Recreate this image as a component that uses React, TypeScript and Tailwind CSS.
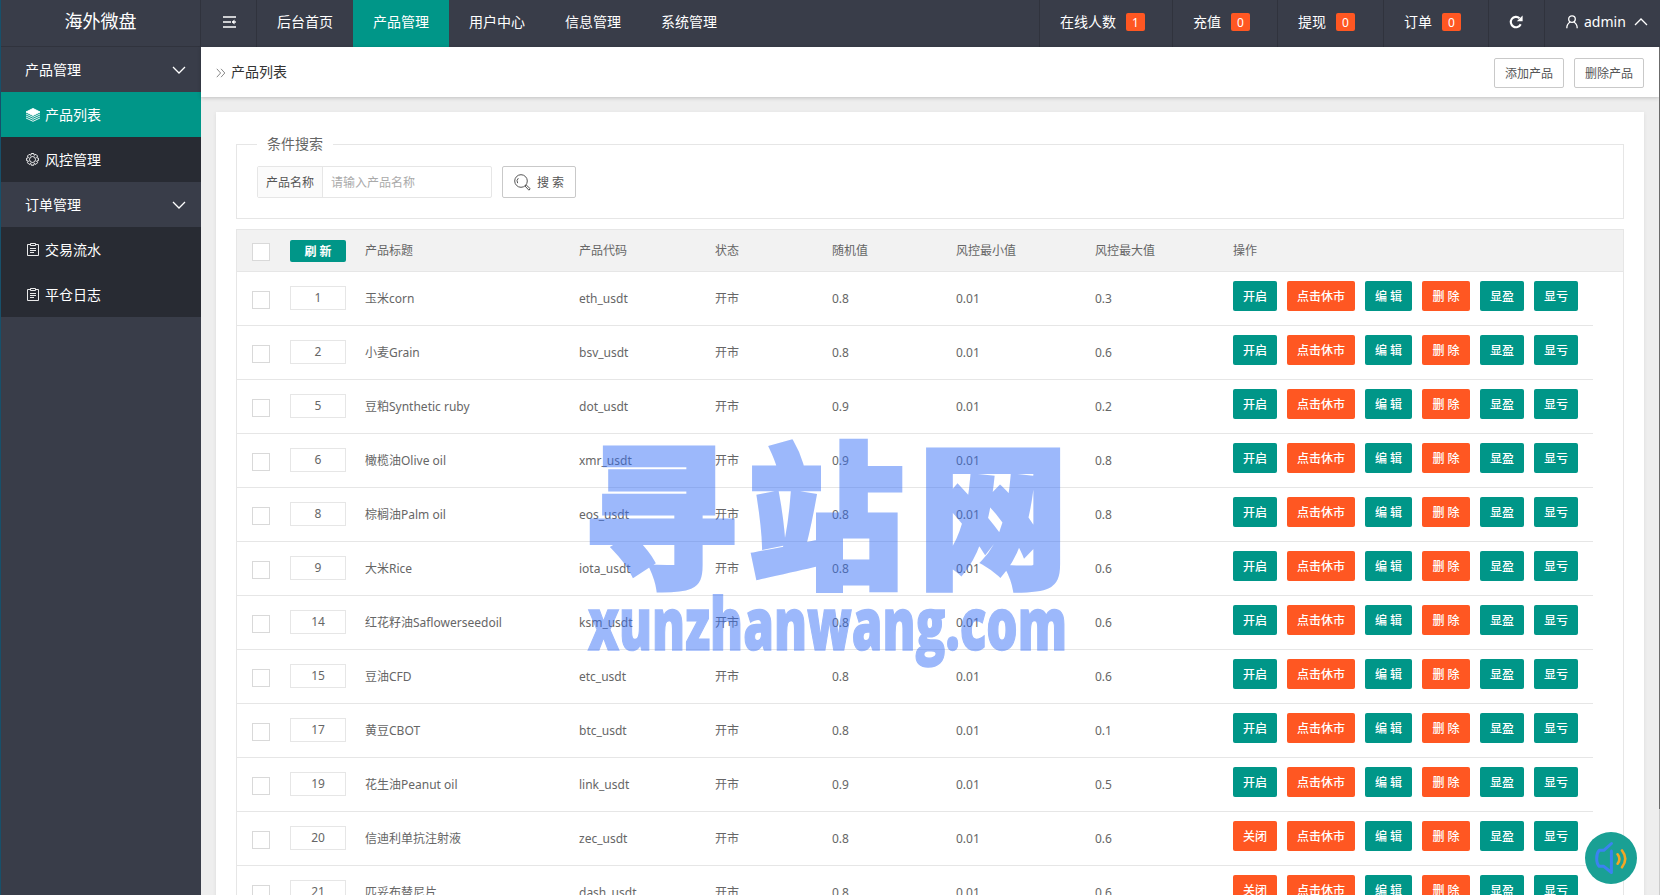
import clsx from "clsx";
import type { ReactNode } from "react";

type Product = {
	id: number;
	title: string;
	code: string;
	random: string;
	min: string;
	max: string;
	open: boolean;
};

const products: Product[] = [
	{ id: 1, title: "玉米corn", code: "eth_usdt", random: "0.8", min: "0.01", max: "0.3", open: true },
	{ id: 2, title: "小麦Grain", code: "bsv_usdt", random: "0.8", min: "0.01", max: "0.6", open: true },
	{ id: 5, title: "豆粕Synthetic ruby", code: "dot_usdt", random: "0.9", min: "0.01", max: "0.2", open: true },
	{ id: 6, title: "橄榄油Olive oil", code: "xmr_usdt", random: "0.9", min: "0.01", max: "0.8", open: true },
	{ id: 8, title: "棕榈油Palm oil", code: "eos_usdt", random: "0.8", min: "0.01", max: "0.8", open: true },
	{ id: 9, title: "大米Rice", code: "iota_usdt", random: "0.8", min: "0.01", max: "0.6", open: true },
	{ id: 14, title: "红花籽油Saflowerseedoil", code: "ksm_usdt", random: "0.8", min: "0.01", max: "0.6", open: true },
	{ id: 15, title: "豆油CFD", code: "etc_usdt", random: "0.8", min: "0.01", max: "0.6", open: true },
	{ id: 17, title: "黄豆CBOT", code: "btc_usdt", random: "0.8", min: "0.01", max: "0.1", open: true },
	{ id: 19, title: "花生油Peanut oil", code: "link_usdt", random: "0.9", min: "0.01", max: "0.5", open: true },
	{ id: 20, title: "信迪利单抗注射液", code: "zec_usdt", random: "0.8", min: "0.01", max: "0.6", open: false },
	{ id: 21, title: "匹妥布替尼片", code: "dash_usdt", random: "0.8", min: "0.01", max: "0.6", open: false },
];

const topNav = ["后台首页", "产品管理", "用户中心", "信息管理", "系统管理"];

const counters = [
	{ label: "在线人数", count: 1, width: "w-[133px]" },
	{ label: "充值", count: 0, width: "w-[105px]" },
	{ label: "提现", count: 0, width: "w-[106px]" },
	{ label: "订单", count: 0, width: "w-[105px]" },
];

const columns = "grid grid-cols-[38px_75px_214px_136px_117px_124px_139px_138px_375px]";

const Chevron = ({ up }: { up?: boolean }) => (
	<svg width="14" height="8" viewBox="0 0 14 8" fill="none" stroke="currentColor" strokeWidth="1.3">
		<path d={up ? "M1 7 7 1l6 6" : "M1 1l6 6 6-6"} />
	</svg>
);

const LayersIcon = () => (
	<svg width="16" height="14" viewBox="0 0 16 14" fill="none" stroke="currentColor">
		<path d="M8 .5 15 4 8 7.5 1 4z" fill="currentColor" />
		<path d="M1 6l7 3.3L15 6M1 8l7 3.3L15 8M1 10l7 3.3 7-3.3" strokeWidth="0.9" />
	</svg>
);

const GearIcon = () => (
	<svg width="15" height="15" viewBox="0 0 16 16" fill="none" stroke="currentColor" strokeLinejoin="round">
		<path
			d="M6.7.8h2.6l.5 1.9 1.8-1 1.8 1.8-1 1.8 1.9.5v2.6l-1.9.4 1 1.8-1.8 1.8-1.8-1-.5 1.9H6.7l-.5-1.9-1.8 1-1.8-1.8 1-1.8-1.9-.4V5.8l1.9-.5-1-1.8 1.8-1.8 1.8 1z"
			transform="translate(0 .8)"
			strokeWidth="1"
		/>
		<circle cx="8" cy="8" r="3.2" />
	</svg>
);

const NoteIcon = () => (
	<svg width="12" height="13" viewBox="0 0 12 13" fill="none" stroke="currentColor" strokeWidth="0.9">
		<path d="M3.5 1.5h-3v11h11v-11h-3M3.5.5h5v2h-5zM3 5.5h6M3 7.5h6M3 9.5h4" />
	</svg>
);

const MenuIcon = () => (
	<svg width="14" height="12" viewBox="0 0 14 12" fill="none" stroke="currentColor" strokeWidth="1.7">
		<path d="M1 1h13M1 6h8M1 11h13" />
		<path d="M10 6h4" strokeWidth="1.3" />
		<path d="M12.5 3.5v5L9.8 6z" fill="currentColor" stroke="none" />
	</svg>
);

const RefreshIcon = () => (
	<svg width="14" height="14" viewBox="0 0 14 14" fill="none">
		<path d="M11.7 9.3A5.2 5.2 0 1 1 10.5 3.2" stroke="currentColor" strokeWidth="2.1" />
		<path d="M13.6.4v5.8H7.8z" fill="currentColor" />
	</svg>
);

const UserIcon = () => (
	<svg width="12" height="14" viewBox="0 0 12 14" fill="none" stroke="currentColor" strokeWidth="1.3">
		<circle cx="6" cy="4.1" r="3.3" />
		<path d="M4.2 7C2 8.1.8 10.3.8 13.2M7.8 7c2.2 1.1 3.4 3.3 3.4 6.2" />
	</svg>
);

const SearchIcon = () => (
	<svg width="17" height="17" viewBox="0 0 17 17" fill="none" stroke="currentColor">
		<circle cx="7" cy="7" r="6.3" />
		<path d="M3.7 9.2a4 4 0 0 1 .6-5M11 12l1.1-1.1 4.1 3.8-1.3 1.5z" />
	</svg>
);

const SideGroup = ({ title, children }: { title: string; children: ReactNode }) => (
	<div>
		<div className="flex h-[45px] items-center justify-between pr-[15px] pl-6 text-white">
			<span>{title}</span>
			<Chevron />
		</div>
		<div className="bg-[#282b33]">{children}</div>
	</div>
);

const SideItem = ({ label, icon, active }: { label: string; icon: ReactNode; active?: boolean }) => (
	<div className={clsx("flex h-[45px] items-center pl-6 text-white", active && "bg-[#009688]")}>
		<span className="flex w-5 items-center">{icon}</span>
		<span>{label}</span>
	</div>
);

const Action = ({ label, width, danger }: { label: string; width: string; danger?: boolean }) => (
	<button
		className={clsx(
			"h-[30px] rounded-xs pt-0.5 font-medium whitespace-nowrap text-white",
			width,
			danger ? "bg-[#ff5722]" : "bg-[#009688]"
		)}
	>
		{label}
	</button>
);

const CheckBox = () => <div className="h-[18px] w-[18px] border border-[#d9d9d9] bg-white" />;

const ProductRow = ({ product }: { product: Product }) => (
	<div className={clsx(columns, "h-[54px] w-[1356px] border-b border-[#e6e6e6]")}>
		<div className="pt-[19px] pl-[15px]">
			<CheckBox />
		</div>
		<div className="pt-[14px] pl-[15px]">
			<div className="flex h-6 w-14 items-center justify-center border border-[#e6e6e6]">{product.id}</div>
		</div>
		<div className="pt-[17px] pl-[15px] leading-5">{product.title}</div>
		<div className="pt-[17px] pl-[15px] leading-5">{product.code}</div>
		<div className="pt-[17px] pl-[15px] leading-5">开市</div>
		<div className="pt-[17px] pl-[15px] leading-5">{product.random}</div>
		<div className="pt-[17px] pl-[15px] leading-5">{product.min}</div>
		<div className="pt-[17px] pl-[15px] leading-5">{product.max}</div>
		<div className="flex gap-2.5 pt-[9px] pl-[15px]">
			<Action label={product.open ? "开启" : "关闭"} width="w-11" danger={!product.open} />
			<Action label="点击休市" width="w-[68px]" danger />
			<Action label="编 辑" width="w-[47px]" />
			<Action label="删 除" width="w-12" danger />
			<Action label="显盈" width="w-11" />
			<Action label="显亏" width="w-11" />
		</div>
	</div>
);

const Watermark = () => (
	<svg
		className="pointer-events-none absolute top-[430px] left-[580px]"
		width="500"
		height="250"
		fill="#3770f7"
		stroke="#3770f7"
		opacity="0.49"
	>
		<g fontFamily="'Noto Sans CJK SC', sans-serif" fontWeight="900" fontSize="156" strokeWidth="5">
			<text x="1" y="145">寻</text>
			<text x="167" y="145">站</text>
			<text x="337" y="145" textLength="150" lengthAdjust="spacingAndGlyphs">网</text>
		</g>
		<text
			x="7"
			y="220"
			fontFamily="'Open Sans', 'Noto Sans', sans-serif"
			fontWeight="800"
			fontSize="73"
			strokeWidth="1.5"
			textLength="479"
			lengthAdjust="spacingAndGlyphs"
		>
			xunzhanwang.com
		</text>
	</svg>
);

const Header = () => (
	<header className="flex h-[47px] bg-[#393d49] text-white">
		<div className="flex w-14 items-center justify-center border-r border-[#30333d] pb-[3px]">
			<MenuIcon />
		</div>
		<nav className="flex">
			{topNav.map((item) => (
				<div
					key={item}
					className={clsx("flex w-24 items-center justify-center pb-[3px]", item === "产品管理" && "bg-[#009688]")}
				>
					{item}
				</div>
			))}
		</nav>
		<div className="ml-auto flex">
			{counters.map(({ label, count, width }) => (
				<div key={label} className={clsx("flex items-center gap-2.5 border-l border-[#30333d] pb-[3px] pl-5", width)}>
					<span>{label}</span>
					<span className="flex h-[18px] w-[19px] items-center justify-center rounded-xs bg-[#ff5722] pt-px text-xs">
						{count}
					</span>
				</div>
			))}
			<div className="flex w-14 items-center border-l border-[#30333d] pb-[3px] pl-5">
				<RefreshIcon />
			</div>
			<div className="flex w-[116px] items-center border-l border-[#30333d] pb-[3px] pl-[21px]">
				<UserIcon />
				<span className="ml-1.5 w-[50px]">admin</span>
				<Chevron up />
			</div>
		</div>
	</header>
);

const App = () => {
	return (
		<div className="relative flex h-[895px] w-[1660px] overflow-hidden border-l border-[#17506a] bg-[#eeeeee] font-['Noto_Sans','Noto_Sans_CJK_SC',sans-serif] text-sm">
			<aside className="w-[200px] shrink-0 bg-[#393d49]">
				<div className="flex h-[47px] items-center justify-center border-r border-b border-[#30333d] pb-1 text-lg text-white">
					海外微盘
				</div>
				<SideGroup title="产品管理">
					<SideItem label="产品列表" icon={<LayersIcon />} active />
					<SideItem label="风控管理" icon={<GearIcon />} />
				</SideGroup>
				<SideGroup title="订单管理">
					<SideItem label="交易流水" icon={<span className="pl-0.5"><NoteIcon /></span>} />
					<SideItem label="平仓日志" icon={<span className="pl-0.5"><NoteIcon /></span>} />
				</SideGroup>
			</aside>

			<div className="flex min-w-0 flex-1 flex-col">
				<Header />
				<div className="flex min-h-0 flex-1">
					<main className="flex w-[1458px] flex-col">
						<div className="flex h-[50px] shrink-0 items-center bg-white pr-[15px] pl-[15px] shadow-[0_1px_4px_rgba(0,0,0,0.2)]">
							<svg width="10" height="10" viewBox="0 0 10 10" fill="none" stroke="#888" className="mt-0.5">
								<path d="M.8.8 4.6 5 .8 9.2M5 .8 8.8 5 5 9.2" />
							</svg>
							<span className="ml-[5px] text-[#333]">产品列表</span>
							<div className="mt-0.5 ml-auto flex gap-2.5 text-xs text-[#555]">
								<button className="h-[30px] w-[70px] rounded-xs border border-[#c9c9c9] bg-white pt-px">添加产品</button>
								<button className="h-[30px] w-[70px] rounded-xs border border-[#c9c9c9] bg-white pt-px">删除产品</button>
							</div>
						</div>

						<div className="mx-[15px] mt-[15px] flex-1 bg-white px-5 pt-[22px] text-xs text-[#666] shadow-[0_1px_4px_rgba(0,0,0,0.08)]">
							<fieldset className="h-[85px] border border-[#e6e6e6] px-5">
								<legend className="h-5 px-2.5 text-sm leading-5">条件搜索</legend>
								<div className="mt-3 flex gap-2.5">
									<div className="flex h-8 w-[235px] rounded-xs border border-[#e6e6e6]">
										<span className="flex w-[65px] items-center justify-center border-r border-[#e6e6e6] bg-[#fbfbfb] pt-0.5 text-[#555]">
											产品名称
										</span>
										<input
											className="min-w-0 flex-1 pt-0.5 pl-2 outline-none placeholder:text-[#aaa]"
											placeholder="请输入产品名称"
										/>
									</div>
									<button className="flex h-8 w-[74px] items-center rounded-xs border border-[#c9c9c9] pl-[11px] text-[#555]">
										<SearchIcon />
										<span className="ml-1.5 pt-0.5">搜 索</span>
									</button>
								</div>
							</fieldset>

							<div className="mt-2.5 border border-[#e6e6e6]">
								<div className="border-b border-[#e6e6e6] bg-[#f2f2f2]">
									<div className={clsx(columns, "h-[41px] items-center")}>
										<div className="pt-0.5 pl-[15px]">
											<CheckBox />
										</div>
										<div className="pl-[15px]">
											<button className="h-[22px] w-14 rounded-xs bg-[#009688] pt-0.5 font-bold text-white">刷 新</button>
										</div>
										<div className="pl-[15px]">产品标题</div>
										<div className="pl-[15px]">产品代码</div>
										<div className="pl-[15px]">状态</div>
										<div className="pl-[15px]">随机值</div>
										<div className="pl-[15px]">风控最小值</div>
										<div className="pl-[15px]">风控最大值</div>
										<div className="pl-[15px]">操作</div>
									</div>
								</div>
								{products.map((product) => (
									<ProductRow key={product.id} product={product} />
								))}
							</div>
						</div>
					</main>
					<div className="w-px bg-[#cccccc]">
						<div className="h-[762px] bg-[#6b6b6b]" />
					</div>
				</div>
			</div>

			<Watermark />

			<div className="absolute right-[23px] bottom-[11px] flex h-[52px] w-[52px] items-center justify-center rounded-full bg-[#1aa094]">
				<svg width="34" height="34" viewBox="0 0 34 34" fill="none" strokeWidth="3" strokeLinecap="round" strokeLinejoin="round">
					<path d="M17.5 2.5 9.8 9.3H5.2Q2.7 12 2.7 17.5T5.2 25.3h4.6l7.6 6.2V10" stroke="#3b82f0" />
					<path d="M23.6 13.3q3.6 4.7 0 9.4M28 9.5q6.5 8.2 0 16.8" stroke="#f5a623" strokeWidth="2.6" />
				</svg>
			</div>
		</div>
	);
};

export default App;
